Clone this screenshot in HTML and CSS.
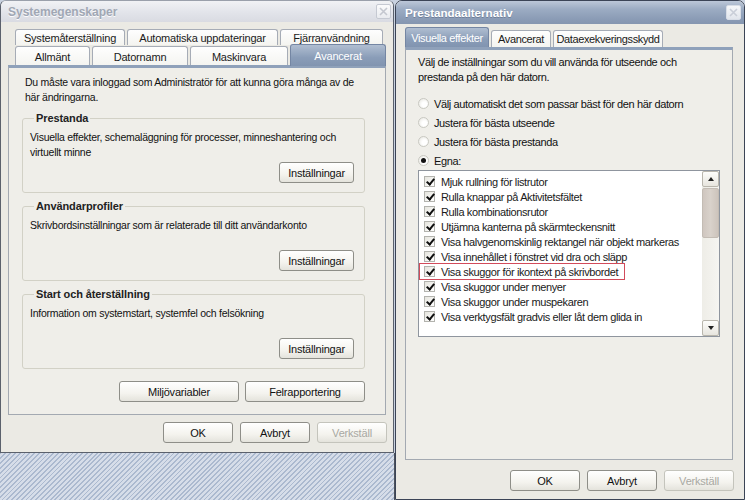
FILE: index.html
```html
<!DOCTYPE html>
<html lang="sv">
<head>
<meta charset="utf-8">
<title>Systemegenskaper</title>
<link rel="stylesheet" href="styles.css">
</head>
<body>
<div class="screen">
  <div class="leftcol">
    <div class="win win-left">
      <div class="titlebar inactive">
        <span class="title">Systemegenskaper</span>
        <span class="closebtn"><svg width="9" height="9" viewBox="0 0 9 9"><path d="M1 1L8 8M8 1L1 8" stroke="#c4c7cf" stroke-width="1.6"/></svg></span>
      </div>
      <div class="winbody left-body">
        <div class="tabrow back">
          <div class="tab">Systemåterställning</div>
          <div class="tab">Automatiska uppdateringar</div>
          <div class="tab">Fjärranvändning</div>
        </div>
        <div class="tabrow front">
          <div class="tab">Allmänt</div>
          <div class="tab">Datornamn</div>
          <div class="tab">Maskinvara</div>
          <div class="tab sel">Avancerat</div>
        </div>
        <div class="pane left-pane">
          <p class="intro">Du måste vara inloggad som Administratör för att kunna göra många av de här ändringarna.</p>
          <fieldset class="group">
            <legend>Prestanda</legend>
            <p class="gtext">Visuella effekter, schemaläggning för processer, minneshantering och virtuellt minne</p>
            <div class="btnrow"><button class="btn">Inställningar</button></div>
          </fieldset>
          <fieldset class="group">
            <legend>Användarprofiler</legend>
            <p class="gtext">Skrivbordsinställningar som är relaterade till ditt användarkonto</p>
            <div class="btnrow"><button class="btn">Inställningar</button></div>
          </fieldset>
          <fieldset class="group">
            <legend>Start och återställning</legend>
            <p class="gtext">Information om systemstart, systemfel och felsökning</p>
            <div class="btnrow"><button class="btn">Inställningar</button></div>
          </fieldset>
          <div class="btnrow panebtns">
            <button class="btn wide">Miljövariabler</button>
            <button class="btn wide">Felrapportering</button>
          </div>
        </div>
        <div class="dlgbtns">
          <button class="btn dlg">OK</button>
          <button class="btn dlg">Avbryt</button>
          <button class="btn dlg disabled">Verkställ</button>
        </div>
      </div>
    </div>
    <div class="desktop"></div>
  </div>

  <div class="win win-right">
    <div class="titlebar active">
      <span class="title">Prestandaalternativ</span>
      <span class="closebtn"><svg width="9" height="9" viewBox="0 0 9 9"><path d="M1 1L8 8M8 1L1 8" stroke="#c9ced8" stroke-width="1.6"/></svg></span>
    </div>
    <div class="winbody right-body">
      <div class="tabrow rtabs">
        <div class="tab sel t1">Visuella effekter</div>
        <div class="tab t2">Avancerat</div>
        <div class="tab t3">Dataexekveringsskydd</div>
      </div>
      <div class="pane right-pane">
        <p class="intro2">Välj de inställningar som du vill använda för utseende och prestanda på den här datorn.</p>
        <div class="radios">
          <div class="radio-row"><span class="radio"></span>Välj automatiskt det som passar bäst för den här datorn</div>
          <div class="radio-row"><span class="radio"></span>Justera för bästa utseende</div>
          <div class="radio-row"><span class="radio"></span>Justera för bästa prestanda</div>
          <div class="radio-row"><span class="radio on"></span>Egna:</div>
        </div>
        <div class="listbox">
          <div class="items">
            <div class="item"><span class="cb"></span>Mjuk rullning för listrutor</div>
            <div class="item"><span class="cb"></span>Rulla knappar på Aktivitetsfältet</div>
            <div class="item"><span class="cb"></span>Rulla kombinationsrutor</div>
            <div class="item"><span class="cb"></span>Utjämna kanterna på skärmteckensnitt</div>
            <div class="item"><span class="cb"></span>Visa halvgenomskinlig rektangel när objekt markeras</div>
            <div class="item"><span class="cb"></span>Visa innehållet i fönstret vid dra och släpp</div>
            <div class="item marked"><span class="cb"></span>Visa skuggor för ikontext på skrivbordet</div>
            <div class="item"><span class="cb"></span>Visa skuggor under menyer</div>
            <div class="item"><span class="cb"></span>Visa skuggor under muspekaren</div>
            <div class="item"><span class="cb"></span>Visa verktygsfält gradvis eller låt dem glida in</div>
          </div>
          <div class="scrollbar">
            <div class="sbtn"><span class="arrow up"></span></div>
            <div class="track"><div class="thumb"></div></div>
            <div class="sbtn"><span class="arrow down"></span></div>
          </div>
        </div>
      </div>
      <div class="dlgbtns right-dlg">
        <button class="btn dlg">OK</button>
        <button class="btn dlg">Avbryt</button>
        <button class="btn dlg disabled">Verkställ</button>
      </div>
    </div>
  </div>
</div>
</body>
</html>
```

FILE: styles.css
```css
* { box-sizing: border-box; }
html, body { margin: 0; padding: 0; }
body {
  width: 745px;
  height: 500px;
  overflow: hidden;
  font-family: "Liberation Sans", Arial, sans-serif;
  font-size: 11px;
  color: #111;
  background: #c9d2e0;
}
p { margin: 0; }

.screen { display: flex; width: 745px; height: 500px; }
.leftcol { width: 395px; display: flex; flex-direction: column; flex: none; }

.win {
  background: #ebeae4;
  display: flex;
  flex-direction: column;
  flex: none;
  overflow: hidden;
}
.win-left {
  width: 394px;
  height: 453px;
  border: 1px solid #5b616c;
  border-top-color: #9aa0ab;
  border-radius: 6px 6px 0 0;
  font-size: 10.5px;
  letter-spacing: -0.25px;
}
.win-right {
  width: 350px;
  height: 500px;
  border: 1px solid #3b4456;
  border-radius: 7px 7px 0 0;
  letter-spacing: -0.38px;
}
.desktop {
  flex: 1;
  background: repeating-linear-gradient(135deg, #abb9cf 0 1.3px, #d6dde9 1.3px 3.4px);
  border-right: 1px solid #4c525c;
}

/* title bars */
.titlebar {
  display: flex;
  align-items: center;
  justify-content: space-between;
  flex: none;
  letter-spacing: 0;
}
.titlebar .title { font-weight: bold; font-size: 12px; }
.titlebar.inactive {
  height: 21px;
  padding: 0 2px 0 7px;
  background: linear-gradient(#f1f2f5, #e2e4ea 55%, #d9dbe2);
}
.titlebar.inactive .title { color: #a0a7b4; text-shadow: 0 1px 0 #fbfbfc; }
.titlebar.active {
  height: 23px;
  padding: 0 3px 0 9px;
  background: linear-gradient(#bcc7d8, #9cacc3 35%, #8a9bb5 80%, #8596b0);
}
.titlebar.active .title { color: #fff; font-size: 11.6px; text-shadow: 0 1px 0 #6f7f99; }
.closebtn {
  width: 15px;
  height: 15px;
  border: 1px solid #c5c9d2;
  border-radius: 2px;
  background: linear-gradient(#fbfbfc, #e9ebef);
  display: flex;
  align-items: center;
  justify-content: center;
}
.titlebar.active .closebtn { border-color: #d8dde6; background: linear-gradient(#f6f7f9, #e1e5ec); }

/* bodies */
.left-body { padding: 7px 7px 0 7px; display: flex; flex-direction: column; }
.right-body { padding: 3px 11px 0 9px; display: flex; flex-direction: column; }

/* tabs */
.tabrow { display: grid; gap: 2px; margin-left: 7px; }
.tabrow.back { grid-template-columns: 110px 151px 103px; height: 16px; }
.tabrow.front { grid-template-columns: 75px 96px 98px 96px; height: 21px; margin-top: -1px; align-items: end; }
.tab {
  border: 1px solid #a6acb6;
  border-bottom: none;
  border-radius: 3px 3px 0 0;
  background: linear-gradient(#fefefe, #f4f4f0);
  display: flex;
  align-items: center;
  justify-content: center;
  white-space: nowrap;
  color: #1a1a1a;
  height: 100%;
}
.win-left .tab { font-size: 11px; letter-spacing: -0.2px; }
.tabrow.front .tab { height: 20px; }
.tab.sel {
  background: linear-gradient(#b0bed1, #8a9db8 60%, #8194b0);
  border-color: #7486a3;
  color: #fff;
  position: relative;
  z-index: 1;
}
.tabrow.front .tab.sel { height: 22px; }

.rtabs { display: flex; gap: 2px; margin-left: 0; height: 20px; align-items: flex-end; }
.rtabs .tab { height: 17px; }
.rtabs .tab.sel { height: 20px; }
.rtabs .t1 { width: 84px; }
.rtabs .t2 { width: 60px; }
.rtabs .t3 { width: 110px; }

/* panes */
.pane {
  border: 1px solid #a3a9b1;
  border-top: 3px solid #8fa1ba;
  background: #efeee9;
  flex: none;
}
.left-pane { height: 350px; padding: 7px 20px 0 13px; }
.right-pane { height: 413px; padding: 5px 12px 0 12px; }

.intro { margin-left: 3px; line-height: 15px; }
.intro2 { line-height: 15px; }

.group {
  margin: 6px 0 0;
  padding: 5px 10px 9px 7px;
  border: 1px solid #d2d1c6;
  border-radius: 3px;
  min-width: 0;
}
.group legend {
  font-weight: bold;
  font-size: 11px;
  color: #222;
  padding: 0 2px;
  margin-left: 4px;
  line-height: 14px;
  letter-spacing: -0.1px;
}
.gtext { line-height: 15px; min-height: 30px; }

.btnrow { display: flex; justify-content: flex-end; gap: 6px; margin-top: 2px; }
.panebtns { margin-top: 12px; }

.btn {
  font-family: "Liberation Sans", Arial, sans-serif;
  font-size: 11px;
  letter-spacing: -0.2px;
  color: #111;
  height: 21px;
  width: 75px;
  padding: 0;
  border: 1px solid #8e8e88;
  border-radius: 3px;
  background: linear-gradient(#ffffff, #f4f3ee 60%, #e4e3dc);
}
.btn.wide { width: 120px; }
.btn.dlg { width: 70px; }
.btn.disabled { color: #a8a8a2; border-color: #c4c4bc; }

.dlgbtns { display: flex; justify-content: flex-end; gap: 7px; margin-top: 7px; margin-right: -1px; }
.right-dlg { margin-top: 10px; }

/* radios */
.radios { margin-top: 9px; }
.radio-row { height: 19px; display: flex; align-items: center; gap: 5px; }
.radio {
  width: 11px;
  height: 11px;
  border-radius: 50%;
  border: 1px solid #c9c9c2;
  background: radial-gradient(circle at 60% 60%, #ffffff 30%, #e4e3dc);
  display: flex;
  align-items: center;
  justify-content: center;
  flex: none;
}
.radio.on::after {
  content: "";
  width: 5px;
  height: 5px;
  border-radius: 50%;
  background: #111;
}

/* listbox */
.listbox {
  width: 302px;
  height: 167px;
  border: 1px solid #8f959e;
  background: #fff;
  display: flex;
}
.items { flex: 1; padding-top: 3px; }
.item {
  display: flex;
  align-items: center;
  height: 15px;
  width: max-content;
  gap: 6px;
  padding: 0 6px 0 4px;
  margin-left: 1px;
  color: #1a1a1a;
}
.item.marked { outline: 1px solid #d24b5b; }
.cb {
  width: 11px;
  height: 11px;
  border: 1px solid #b3b3ae;
  background: linear-gradient(135deg, #e6e5de, #ffffff);
  position: relative;
  flex: none;
}
.cb::after {
  content: "";
  position: absolute;
  left: 3px;
  top: 0px;
  width: 3px;
  height: 6px;
  border-right: 2px solid #111;
  border-bottom: 2px solid #111;
  transform: rotate(40deg);
}

.scrollbar {
  width: 17px;
  display: flex;
  flex-direction: column;
  background: #f2f1ec;
  flex: none;
}
.sbtn {
  height: 16px;
  border: 1px solid #b9b6ad;
  border-radius: 2px;
  background: linear-gradient(#fdfdfb, #e7e5de);
  display: flex;
  align-items: center;
  justify-content: center;
  flex: none;
}
.arrow { width: 0; height: 0; border-left: 3.5px solid transparent; border-right: 3.5px solid transparent; }
.arrow.up { border-bottom: 4px solid #222; }
.arrow.down { border-top: 4px solid #222; }
.track { flex: 1; padding-top: 1px; background: linear-gradient(90deg, #eeede7, #f6f5f1); }
.thumb {
  height: 50px;
  border: 1px solid #c3bcb4;
  border-radius: 2px;
  background: linear-gradient(90deg, #cfc6bf, #d9d2cb 50%, #cdc4bc);
}
```
